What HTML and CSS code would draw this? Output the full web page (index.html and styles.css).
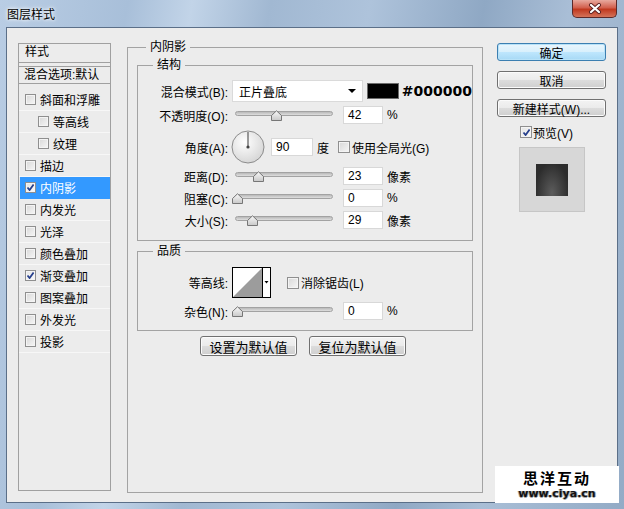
FILE: index.html
```html
<!DOCTYPE html>
<html lang="zh-CN">
<head>
    <meta charset="UTF-8">
    <title>图层样式</title>
    <link rel="stylesheet" href="styles.css">
</head>
<body>
<div class="window">
    <div class="titlebar">
        <span class="title">图层样式</span>
        <span class="close">
            <svg width="14" height="11" viewBox="0 0 14 11">
                <path d="M3 2 L11 9 M11 2 L3 9" stroke="#5a2020" stroke-width="4" stroke-linecap="round"/>
                <path d="M3 2 L11 9 M11 2 L3 9" stroke="#fff" stroke-width="2.2" stroke-linecap="round"/>
            </svg>
        </span>
    </div>

    <div class="client">
        <!-- effects list -->
        <div class="style-list">
            <div class="list-head">样式</div>
            <div class="list-blend">混合选项:默认</div>
            <div class="list-item"><span class="check"></span>斜面和浮雕</div>
            <div class="list-item sub"><span class="check"></span>等高线</div>
            <div class="list-item sub"><span class="check"></span>纹理</div>
            <div class="list-item"><span class="check"></span>描边</div>
            <div class="list-item active"><span class="check on"></span>内阴影</div>
            <div class="list-item"><span class="check"></span>内发光</div>
            <div class="list-item"><span class="check"></span>光泽</div>
            <div class="list-item"><span class="check"></span>颜色叠加</div>
            <div class="list-item"><span class="check on"></span>渐变叠加</div>
            <div class="list-item"><span class="check"></span>图案叠加</div>
            <div class="list-item"><span class="check"></span>外发光</div>
            <div class="list-item"><span class="check"></span>投影</div>
        </div>

        <!-- inner shadow settings -->
        <div class="main">
            <fieldset class="group outer">
                <legend>内阴影</legend>

                <fieldset class="group structure">
                    <legend>结构</legend>
                    <div class="rows">
                        <div class="row tall">
                            <span class="lbl">混合模式(B):</span>
                            <div class="select">
                                <span>正片叠底</span>
                                <span class="arrow"></span>
                            </div>
                            <span class="swatch"></span>
                            <span class="hex">#000000</span>
                        </div>
                        <div class="row">
                            <span class="lbl">不透明度(O):</span>
                            <div class="slider"><span class="track"></span><span class="thumb" style="--pos:42"></span></div>
                            <span class="field">42</span>
                            <span class="unit">%</span>
                        </div>
                        <div class="row dial-row">
                            <span class="lbl">角度(A):</span>
                            <svg class="dial" width="34" height="34" viewBox="0 0 34 34">
                                <defs>
                                    <radialGradient id="dialFill" cx="40%" cy="35%" r="70%">
                                        <stop offset="0" stop-color="#ffffff"/>
                                        <stop offset="1" stop-color="#d4d4d4"/>
                                    </radialGradient>
                                </defs>
                                <circle cx="17" cy="17" r="16" fill="url(#dialFill)" stroke="#8c8c8c"/>
                                <line x1="17" y1="17" x2="17" y2="2" stroke="#5a5a5a" stroke-width="1.2"/>
                                <circle cx="17" cy="17" r="1.6" fill="#444"/>
                            </svg>
                            <span class="field angle">90</span>
                            <span class="unit">度</span>
                            <span class="check-label global"><span class="box"></span>使用全局光(G)</span>
                        </div>
                        <div class="row">
                            <span class="lbl">距离(D):</span>
                            <div class="slider"><span class="track"></span><span class="thumb" style="--pos:23"></span></div>
                            <span class="field">23</span>
                            <span class="unit">像素</span>
                        </div>
                        <div class="row">
                            <span class="lbl">阻塞(C):</span>
                            <div class="slider"><span class="track"></span><span class="thumb" style="--pos:0"></span></div>
                            <span class="field">0</span>
                            <span class="unit">%</span>
                        </div>
                        <div class="row">
                            <span class="lbl">大小(S):</span>
                            <div class="slider"><span class="track"></span><span class="thumb" style="--pos:17"></span></div>
                            <span class="field">29</span>
                            <span class="unit">像素</span>
                        </div>
                    </div>
                </fieldset>

                <fieldset class="group quality">
                    <legend>品质</legend>
                    <div class="rows">
                        <div class="row contour-row">
                            <span class="lbl">等高线:</span>
                            <div class="contour">
                                <svg width="39" height="31" viewBox="0 0 39 31">
                                    <rect x="0.5" y="0.5" width="38" height="30" fill="#fff" stroke="#000"/>
                                    <polygon points="1,30 30,1 30,30" fill="#9c9c9c"/>
                                    <line x1="30.5" y1="0.5" x2="30.5" y2="30.5" stroke="#000"/>
                                    <polygon points="32.5,14 36.5,14 34.5,16.5" fill="#000"/>
                                </svg>
                            </div>
                            <span class="check-label antialias"><span class="box"></span>消除锯齿(L)</span>
                        </div>
                        <div class="row">
                            <span class="lbl">杂色(N):</span>
                            <div class="slider"><span class="track"></span><span class="thumb" style="--pos:0"></span></div>
                            <span class="field">0</span>
                            <span class="unit">%</span>
                        </div>
                    </div>
                </fieldset>

                <div class="defaults">
                    <span class="btn wide">设置为默认值</span>
                    <span class="btn wide">复位为默认值</span>
                </div>
            </fieldset>
        </div>

        <!-- dialog buttons and preview -->
        <div class="side">
            <span class="btn default">确定</span>
            <span class="btn">取消</span>
            <span class="btn">新建样式(W)...</span>
            <span class="check-label preview-check"><span class="box on"></span>预览(V)</span>
            <div class="preview"><span class="preview-swatch"></span></div>
        </div>
    </div>

    <div class="watermark">
        <div class="wm-name">思洋互动</div>
        <div class="wm-url">www.ciya.cn</div>
    </div>
</div>
</body>
</html>
```

FILE: styles.css
```css
* {
    box-sizing: border-box;
}
body {
    margin: 0;
    width: 624px;
    height: 509px;
    overflow: hidden;
    font-family: "Liberation Sans", "Noto Sans CJK SC", sans-serif;
    font-size: 12px;
    color: #000;
}
.window {
    position: relative;
    height: 509px;
    padding: 0 6px 6px;
    display: flex;
    flex-direction: column;
    background: linear-gradient(100deg, #b9cde4 0%, #a8bfd9 18%, #c2d4e8 27%, #a1b8d2 38%, #aec3db 52%, #8fa8c4 68%, #a9bed6 80%, #93abc6 100%);
}

/* title bar */
.titlebar {
    height: 27px;
    display: flex;
    align-items: center;
}
.title {
    margin-left: 1px;
    font-family: "Noto Sans CJK SC", sans-serif;
    font-size: 12px;
    text-shadow: 0 0 5px #fff, 0 0 3px #fff;
}
.close {
    align-self: flex-start;
    margin-left: auto;
    margin-right: 1px;
    width: 45px;
    height: 18px;
    display: flex;
    align-items: center;
    justify-content: center;
    border: 1px solid #5b2a2a;
    border-top: none;
    border-radius: 0 0 5px 5px;
    background: linear-gradient(#e8a99e, #d2604d 45%, #c0391f 55%, #d4735a);
}

/* client area */
.client {
    flex: 1;
    display: flex;
    align-items: flex-start;
    padding: 15px 11px 0;
    border: 1px solid #5b6f88;
    background: #ececec;
}

.style-list {
    width: 93px;
    height: 448px;
    border: 1px solid #a0a0a0;
    flex-shrink: 0;
}
.list-head {
    height: 19px;
    line-height: 17px;
    padding-left: 6px;
    border-bottom: 1px solid #a0a0a0;
}
.list-blend {
    height: 18px;
    margin-top: 3px;
    line-height: 16px;
    padding-left: 5px;
    border-top: 1px solid #a0a0a0;
    border-bottom: 1px solid #a0a0a0;
    white-space: nowrap;
}
.list-item {
    height: 22px;
    display: flex;
    align-items: center;
    padding-left: 6px;
    gap: 4px;
    border-bottom: 1px solid #f7f7f7;
}
.list-blend + .list-item {
    margin-top: 5px;
}
.list-item.sub {
    padding-left: 19px;
}
.list-item.active {
    margin-left: 1px;
    padding-left: 5px;
    background: #3399ff;
    color: #fff;
    border-bottom-color: #3399ff;
}

/* checkboxes */
.check,
.box {
    display: inline-block;
    width: 11px;
    height: 11px;
    flex-shrink: 0;
    border: 1px solid #8f8f8f;
    background: linear-gradient(135deg, #d8d8d8, #f6f6f6);
    box-shadow: inset 0 0 0 1px #f4f4f4;
}
.box {
    width: 12px;
    height: 12px;
}
.check.on,
.box.on {
    background:
        url("data:image/svg+xml,%3Csvg xmlns='http://www.w3.org/2000/svg' width='9' height='9'%3E%3Cpath d='M1.5 4.5 L3.6 7 L7.6 1.5' fill='none' stroke='%23263f8c' stroke-width='1.8'/%3E%3C/svg%3E") center / 9px 9px no-repeat,
        linear-gradient(135deg, #e4e4e4, #fafafa);
}

/* main column */
.main {
    width: 356px;
    margin: -4px 0 0 16px;
    flex-shrink: 0;
}
fieldset {
    margin: 0;
    padding: 0;
    min-width: 0;
    border: 1px solid #a3a3a3;
}
legend {
    padding: 0 4px;
    line-height: 16px;
}
.outer {
    height: 454px;
}
.outer > legend {
    margin-left: 18px;
}
.structure,
.quality {
    margin: 2px 9px 0;
}
.structure > legend,
.quality > legend {
    margin-left: 15px;
}
.structure {
    padding: 7px 0 11px;
}
.quality {
    padding: 8px 0 10px;
}
.rows {
    display: flex;
    flex-direction: column;
    gap: 4px;
}
.row {
    height: 18px;
    display: flex;
    align-items: center;
}
.row.tall {
    height: 22px;
}
.dial-row {
    height: 32px;
    margin-top: 3px;
}
.contour-row {
    height: 31px;
}
.lbl {
    width: 90px;
    margin-right: 4px;
    text-align: right;
    white-space: nowrap;
    flex-shrink: 0;
}

.select {
    width: 132px;
    height: 22px;
    display: flex;
    align-items: center;
    justify-content: space-between;
    padding: 0 6px 0 6px;
    background: #fff;
    border: 1px solid #dadada;
}
.arrow {
    width: 0;
    height: 0;
    border-left: 4px solid transparent;
    border-right: 4px solid transparent;
    border-top: 4px solid #000;
}
.swatch {
    width: 32px;
    height: 16px;
    margin-left: 4px;
    background: #000;
    border: 1px solid #6c6c6c;
}
.hex {
    margin-left: 3px;
    font-family: "DejaVu Sans", sans-serif;
    font-weight: bold;
    font-size: 14px;
}

.slider {
    position: relative;
    width: 108px;
    height: 18px;
    margin-right: 3px;
    flex-shrink: 0;
}
.track {
    position: absolute;
    left: 3px;
    top: 5px;
    width: 98px;
    height: 5px;
    border: 1px solid #a2a2a2;
    border-radius: 3px;
    background: linear-gradient(#b9b9b9, #dedede);
}
.thumb {
    position: absolute;
    top: 4px;
    left: calc(var(--pos) * 0.94px - 0.5px);
    width: 11px;
    height: 11px;
    background: url("data:image/svg+xml,%3Csvg xmlns='http://www.w3.org/2000/svg' width='11' height='11'%3E%3ClinearGradient id='g' x1='0' y1='0' x2='0' y2='1'%3E%3Cstop offset='0' stop-color='%23fafafa'/%3E%3Cstop offset='1' stop-color='%23c8c8c8'/%3E%3C/linearGradient%3E%3Cpolygon points='0.5,10.5 0.5,5.5 5.5,0.8 10.5,5.5 10.5,10.5' fill='url(%23g)' stroke='%23767676'/%3E%3C/svg%3E") no-repeat;
}
.field {
    width: 40px;
    height: 18px;
    line-height: 16px;
    padding-left: 4px;
    background: #fff;
    border: 1px solid #d8d8d8;
    flex-shrink: 0;
}
.field.angle {
    width: 42px;
}
.unit {
    margin-left: 4px;
}
.dial {
    margin-left: -1px;
    margin-right: 6px;
}
.check-label {
    display: inline-flex;
    align-items: center;
    gap: 2px;
    white-space: nowrap;
}
.global {
    margin-left: 9px;
}
.contour {
    height: 31px;
}
.antialias {
    margin-left: 16px;
}

.defaults {
    display: flex;
    gap: 12px;
    margin-top: 5px;
    padding-left: 72px;
}

/* buttons */
.btn {
    display: flex;
    align-items: center;
    justify-content: center;
    height: 18px;
    border: 1px solid #707070;
    border-radius: 3px;
    background: linear-gradient(#f3f3f3, #ebebeb 48%, #dcdcdc 52%, #cfcfcf);
    box-shadow: inset 0 0 0 1px #fbfbfb;
    white-space: nowrap;
}
.btn.wide {
    width: 97px;
    height: 20px;
    font-size: 13px;
}
.btn.default {
    border-color: #3c7fb1;
    background: linear-gradient(#eaf6fd, #d9f0fc 48%, #bee6fd 52%, #a7d9f5);
    box-shadow: inset 0 0 0 1px #b8e2f8;
}

.side {
    width: 109px;
    margin-left: 14px;
    display: flex;
    flex-direction: column;
    flex-shrink: 0;
}
.side .btn {
    margin-bottom: 10px;
}
.preview-check {
    height: 12px;
    margin: -1px 0 0 23px;
    gap: 1px;
}
.preview {
    width: 66px;
    height: 65px;
    margin: 9px 0 0 22px;
    display: flex;
    align-items: center;
    justify-content: center;
    background: #d7d7d7;
    border: 1px solid #c6c6c6;
}
.preview-swatch {
    width: 32px;
    height: 32px;
    background: radial-gradient(ellipse at 50% 90%, #5c5c5c, #2c2c2c 75%);
}

/* site mark in the corner */
.watermark {
    position: absolute;
    right: 5px;
    bottom: 6px;
    width: 124px;
    height: 37px;
    display: flex;
    flex-direction: column;
    align-items: center;
    justify-content: center;
    background: #fff;
    font-weight: bold;
}
.wm-name {
    font-family: "Noto Sans CJK SC", sans-serif;
    font-size: 15px;
    line-height: 18px;
    letter-spacing: 2px;
}
.wm-url {
    font-family: "DejaVu Sans", sans-serif;
    font-size: 11px;
    line-height: 13px;
    color: #111;
    text-shadow: 1px 0 0 #aaa, -1px 0 0 #aaa, 0 1px 0 #aaa;
}
```
